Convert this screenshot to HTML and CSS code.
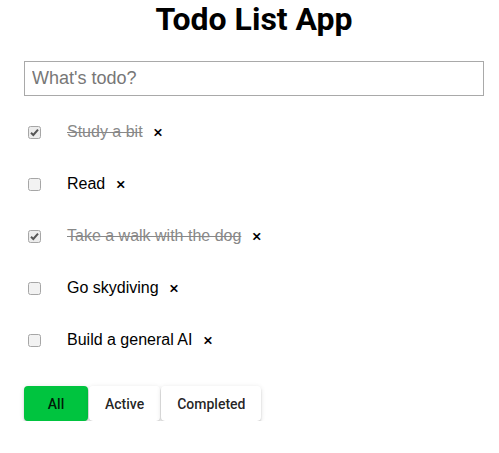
FILE: index.html
```html
<!DOCTYPE html>
<html>
<head>
<meta charset="utf-8">
<link rel="stylesheet" href="styles.css">
</head>
<body>
<div class="app">
  <h1 class="title">Todo List App</h1>
  <input class="new-todo" type="text" placeholder="What's todo?">
  <ul class="todos">
    <li class="todo done">
      <span class="check"><svg width="13" height="13" viewBox="0 0 13 13"><rect x="0.5" y="0.5" width="12" height="12" rx="2" fill="#ececec" stroke="#a6a6a6"/><path d="M3 6.8 L5.3 9 L10 3.6" fill="none" stroke="#555" stroke-width="2"/></svg></span>
      <span class="label">Study a bit</span><span class="remove">×</span>
    </li>
    <li class="todo">
      <span class="check"><svg width="13" height="13" viewBox="0 0 13 13"><rect x="0.5" y="0.5" width="12" height="12" rx="2" fill="#f2f2f2" stroke="#a6a6a6"/></svg></span>
      <span class="label">Read</span><span class="remove">×</span>
    </li>
    <li class="todo done">
      <span class="check"><svg width="13" height="13" viewBox="0 0 13 13"><rect x="0.5" y="0.5" width="12" height="12" rx="2" fill="#ececec" stroke="#a6a6a6"/><path d="M3 6.8 L5.3 9 L10 3.6" fill="none" stroke="#555" stroke-width="2"/></svg></span>
      <span class="label">Take a walk with the dog</span><span class="remove">×</span>
    </li>
    <li class="todo">
      <span class="check"><svg width="13" height="13" viewBox="0 0 13 13"><rect x="0.5" y="0.5" width="12" height="12" rx="2" fill="#f2f2f2" stroke="#a6a6a6"/></svg></span>
      <span class="label">Go skydiving</span><span class="remove">×</span>
    </li>
    <li class="todo">
      <span class="check"><svg width="13" height="13" viewBox="0 0 13 13"><rect x="0.5" y="0.5" width="12" height="12" rx="2" fill="#f2f2f2" stroke="#a6a6a6"/></svg></span>
      <span class="label">Build a general AI</span><span class="remove">×</span>
    </li>
  </ul>
  <div class="filters">
    <button class="filter active">All</button>
    <button class="filter">Active</button>
    <button class="filter">Completed</button>
  </div>
</div>
</body>
</html>
```
FILE: styles.css
```css
html, body {
  margin: 0;
  padding: 0;
  background: #fff;
}
.app {
  width: 460px;
  margin-left: 24px;
  font-family: "Liberation Sans", Arial, sans-serif;
  display: flex;
  flex-direction: column;
}
.title {
  font-family: Roboto, sans-serif;
  font-weight: 700;
  font-size: 32px;
  line-height: 38px;
  margin: 0 0 23px 0;
  text-align: center;
  color: #000;
}
.new-todo {
  box-sizing: border-box;
  width: 460px;
  height: 35px;
  border: 1px solid #a9a9a9;
  padding: 0 7px;
  font-family: "Liberation Sans", Arial, sans-serif;
  font-size: 18px;
  margin: 0;
  outline: none;
}
.new-todo::placeholder {
  color: #777;
}
.todos {
  list-style: none;
  margin: 10px 0 0 0;
  padding: 0;
  display: flex;
  flex-direction: column;
}
.todo {
  height: 52px;
  display: flex;
  align-items: center;
  font-size: 16px;
  color: #000;
}
.check {
  display: flex;
  width: 13px;
  height: 13px;
  margin-left: 4px;
  margin-right: 26px;
}
.label {
  line-height: 18px;
}
.done .label {
  color: #888;
  text-decoration: line-through;
}
.remove {
  margin-left: 11px;
  font-family: Roboto, sans-serif;
  font-weight: 500;
  font-size: 17px;
  line-height: 18px;
  color: #000;
}
.filters {
  margin-top: 20px;
  display: flex;
  gap: 1px;
}
.filter {
  font-family: Roboto, sans-serif;
  font-weight: 500;
  font-size: 14px;
  line-height: 24px;
  height: 35px;
  min-width: 64px;
  padding: 5px 16px;
  border: none;
  border-radius: 4px;
  background: #fff;
  color: rgba(0,0,0,0.87);
  box-shadow: 0 3px 1px -2px rgba(0,0,0,.2), 0 2px 2px 0 rgba(0,0,0,.14), 0 1px 5px 0 rgba(0,0,0,.12);
}
.filter.active {
  background: #00c43f;
}
```
